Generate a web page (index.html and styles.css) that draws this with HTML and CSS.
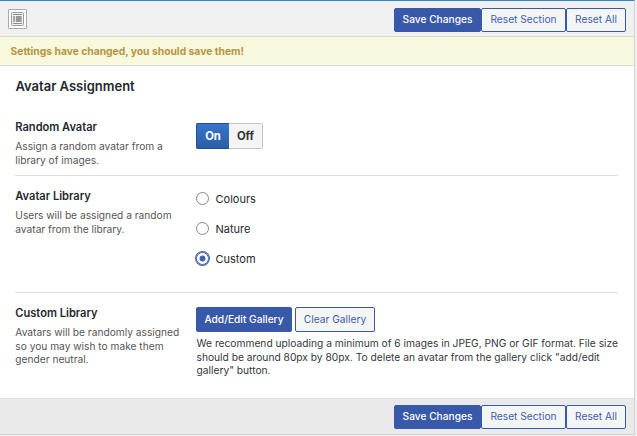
FILE: index.html
```html
<!DOCTYPE html>
<html lang="en">
<head>
<meta charset="utf-8">
<title>Avatar Settings</title>
<link rel="stylesheet" href="styles.css">
</head>
<body>
<form class="panel">
  <header class="bar bar-top">
    <button type="button" class="expand" aria-label="Expand">
      <svg width="13" height="14" viewBox="0 0 13 14">
        <rect x=".5" y=".5" width="12" height="13" rx="1" fill="#f2f2f2" stroke="#9b9b9b"/>
        <path d="M2 2.5h9M2 11.5h9" stroke="#8d8d8d"/>
        <rect x="2" y="4" width="2" height="6" fill="#aaa"/>
        <rect x="4" y="4" width="1" height="6" fill="#e0e0e0"/>
        <rect x="5" y="4" width="5" height="6" fill="#9a9a9a"/>
        <rect x="10" y="4" width="1" height="6" fill="#bbb"/>
      </svg>
    </button>
    <div class="actions">
      <button type="button" class="btn primary save">Save Changes</button>
      <button type="button" class="btn section">Reset Section</button>
      <button type="button" class="btn all">Reset All</button>
    </div>
  </header>
  <div class="notice">Settings have changed, you should save them!</div>
  <main class="content">
    <h2>Avatar Assignment</h2>
    <section class="row random">
      <div class="label"><h3>Random Avatar</h3><p>Assign a random avatar from a<br>library of images.</p></div>
      <div class="field">
        <div class="switch"><span class="on">On</span><span class="off">Off</span></div>
      </div>
    </section>
    <section class="row library">
      <div class="label"><h3>Avatar Library</h3><p>Users will be assigned a random<br>avatar from the library.</p></div>
      <div class="field options">
        <label><i class="radio"></i><span>Colours</span></label>
        <label><i class="radio"></i><span>Nature</span></label>
        <label><i class="radio checked"></i><span>Custom</span></label>
      </div>
    </section>
    <section class="row custom">
      <div class="label"><h3>Custom Library</h3><p>Avatars will be randomly assigned<br>so you may wish to make them<br>gender neutral.</p></div>
      <div class="field">
        <div class="gallery">
          <button type="button" class="btn primary add">Add/Edit Gallery</button>
          <button type="button" class="btn clear">Clear Gallery</button>
        </div>
        <p class="hint">We recommend uploading a minimum of 6 images in JPEG, PNG or GIF format. File size<br>should be around 80px by 80px. To delete an avatar from the gallery click "add/edit<br>gallery" button.</p>
      </div>
    </section>
  </main>
  <footer class="bar bar-bottom">
    <div class="actions">
      <button type="button" class="btn primary save">Save Changes</button>
      <button type="button" class="btn section">Reset Section</button>
      <button type="button" class="btn all">Reset All</button>
    </div>
  </footer>
</form>
</body>
</html>
```
FILE: styles.css
```css
* { box-sizing: border-box; }
body { margin: 0; background: #f0f0f1; font-family: Inter, "Liberation Sans", sans-serif; color: #23282d; overflow: hidden; }
h2, h3, p { margin: 0; }
.panel { width: 635px; height: 435px; display: flex; flex-direction: column; background: #fff; border-top: 1px solid #3485c7; border-right: 1px solid #d5d5d5; border-bottom: 1px solid #d2d2d2; }
.bar { display: flex; align-items: flex-start; padding: 7px 8px 0; }
.bar-top { height: 36px; background: #f0f0f0; border-bottom: 1px solid #d6d6d6; }
.bar-bottom { height: 36px; margin-top: auto; background: #eaeaea; border-top: 1px solid #dedede; padding-top: 6px; }
.actions { display: flex; margin-left: auto; }
.expand { width: 19px; height: 20px; margin-top: 1px; padding: 2px; display: block; background: #fff; border: 1px solid #aaa; border-radius: 1px; }
.expand svg { display: block; }
.btn { height: 24px; padding: 0 0 2px; border: 1px solid #3858a9; border-radius: 2px; background: #f4f6f6; color: #3f5cae; font: 400 10.2px/20px Inter, "Liberation Sans", sans-serif; white-space: nowrap; text-align: center; }
.primary { background: #3858a9; color: #fff; font-weight: 500; }
.save { width: 87px; }
.section { width: 85px; }
.all { width: 60px; }
.notice { height: 29px; padding-left: 10.5px; background: #f8f8dc; border-bottom: 1px solid #dedede; color: #b79543; font-size: 10.3px; font-weight: 700; line-height: 29px; }
.content { padding: 0 16px 0 15px; }
h2 { height: 42px; padding: 10px 0 0 .5px; font-size: 13px; font-weight: 600; line-height: 20px; }
.row { display: flex; }
.row + .row { border-top: 1px solid #dedede; }
.label { flex: none; width: 181px; padding: 11px 0 0 .3px; }
h3 { font-size: 11.1px; font-weight: 600; line-height: 19px; }
.label p { padding-top: 3px; color: #555; font-size: 10.2px; line-height: 13.6px; white-space: nowrap; }
.random { height: 67px; }
.random .label { padding-top: 10px; }
.random .field { padding-top: 15px; }
.library { height: 117px; }
.custom { height: 106px; }
.switch { display: flex; height: 26px; width: 67px; font-size: 11.3px; font-weight: 700; line-height: 24px; text-align: center; }
.on { width: 33px; background: linear-gradient(#3875cc, #2b5da5); border: 1px solid #234d8c; border-right: 0; border-radius: 2px 0 0 2px; color: #fff; }
.off { width: 34px; background: #f5f5f5; border: 1px solid #c4c4c4; border-left: 0; border-radius: 0 2px 2px 0; color: #333; }
.options { padding-top: 8px; font-size: 11px; }
.options label { display: flex; align-items: center; height: 30px; gap: 6.5px; }
.radio { width: 13px; height: 13px; margin-bottom: 1px; border: 1px solid #85888c; border-radius: 50%; background: #fff; }
.checked { border-color: #3858a9; box-shadow: 0 0 0 1px #4166b7; background: radial-gradient(circle, #3f62b7 2.7px, #fff 3.3px); }
.custom .field { padding-top: 14px; }
.gallery { display: flex; gap: 3px; }
.gallery .btn { height: 25px; }
.add { width: 96px; }
.clear { width: 80px; }
.hint { padding: 5px 0 0 .5px; font-size: 10.22px; line-height: 13.6px; white-space: nowrap; color: #32373c; }
```
